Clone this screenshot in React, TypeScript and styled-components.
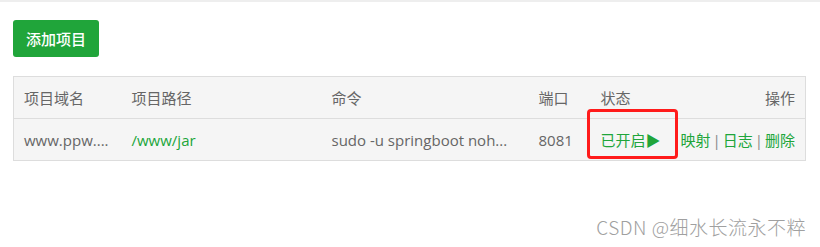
import React from "react";
import styled, { createGlobalStyle } from "styled-components";

const Global = createGlobalStyle`
  html, body { margin: 0; padding: 0; background: #fff; }
  body { font-family: "Open Sans", "Noto Sans CJK SC", sans-serif; }
`;

const Page = styled.div`
  border-top: 2px solid #eeeeee;
  padding: 18px 14px 0 13px;
  width: 820px;
  box-sizing: border-box;
`;

const Toolbar = styled.div`
  display: flex;
  margin-bottom: 19px;
`;

const AddButton = styled.button`
  height: 37px;
  width: 86px;
  border: none;
  border-radius: 3px;
  background: #20a53a;
  color: #fff;
  font-family: "Noto Sans CJK SC", sans-serif;
  font-size: 15px;
  font-weight: 500;
  padding: 0;
  cursor: pointer;
`;

const Table = styled.table`
  width: 793px;
  border-collapse: collapse;
  border: 1px solid #dddddd;
  background: #f5f5f5;
  table-layout: fixed;
  font-size: 15px;
  color: #666;
`;

const Cell = styled.td<{ $align?: "left" | "right"; $green?: boolean }>`
  height: 42px;
  padding: 0 10px;
  text-align: ${(p) => p.$align ?? "left"};
  color: ${(p) => (p.$green ? "#20a53a" : "#666")};
  white-space: nowrap;
  overflow: visible;
  box-sizing: border-box;
  vertical-align: middle;
  border-bottom: 1px solid #dddddd;
  position: relative;
`;

const HeadCell = styled(Cell).attrs({ as: "th" })`
  font-weight: normal;
`;

const Cjk = styled.span`
  font-family: "Noto Sans CJK SC", sans-serif;
`;

const Status = styled.span`
  color: #20a53a;
  font-family: "Noto Sans CJK SC", sans-serif;
`;

const Highlight = styled.div`
  position: absolute;
  left: -4px;
  top: -10px;
  width: 91px;
  height: 50px;
  box-sizing: border-box;
  border: 3px solid #ff1b1b;
  border-radius: 4px;
  pointer-events: none;
`;

const ActionLink = styled.a`
  color: #20a53a;
  text-decoration: none;
  font-family: "Noto Sans CJK SC", sans-serif;
`;

const Sep = styled.span`
  color: #888;
  margin: 0 2px;
`;

const Watermark = styled.div`
  margin-top: 52px;
  text-align: right;
  font-family: "Noto Sans CJK SC", sans-serif;
  font-size: 19px;
  font-weight: 300;
  color: #a0a0a0;
  letter-spacing: 0.5px;
`;

export default function App() {
  return (
    <>
      <Global />
      <Page>
        <Toolbar>
          <AddButton>添加项目</AddButton>
        </Toolbar>
        <Table>
          <colgroup>
            <col style={{ width: 108 }} />
            <col style={{ width: 200 }} />
            <col style={{ width: 207 }} />
            <col style={{ width: 62 }} />
            <col style={{ width: 76 }} />
            <col />
          </colgroup>
          <thead>
            <tr>
              <HeadCell><Cjk>项目域名</Cjk></HeadCell>
              <HeadCell><Cjk>项目路径</Cjk></HeadCell>
              <HeadCell><Cjk>命令</Cjk></HeadCell>
              <HeadCell><Cjk>端口</Cjk></HeadCell>
              <HeadCell><Cjk>状态</Cjk></HeadCell>
              <HeadCell $align="right"><Cjk>操作</Cjk></HeadCell>
            </tr>
          </thead>
          <tbody>
            <tr>
              <Cell>www.ppw....</Cell>
              <Cell $green>/www/jar</Cell>
              <Cell>sudo -u springboot noh...</Cell>
              <Cell>8081</Cell>
              <Cell>
                <Status>已开启▶</Status>
                <Highlight />
              </Cell>
              <Cell $align="right">
                <ActionLink>映射</ActionLink>
                <Sep>|</Sep>
                <ActionLink>日志</ActionLink>
                <Sep>|</Sep>
                <ActionLink>删除</ActionLink>
              </Cell>
            </tr>
          </tbody>
        </Table>
        <Watermark>CSDN @细水长流永不粹</Watermark>
      </Page>
    </>
  );
}
